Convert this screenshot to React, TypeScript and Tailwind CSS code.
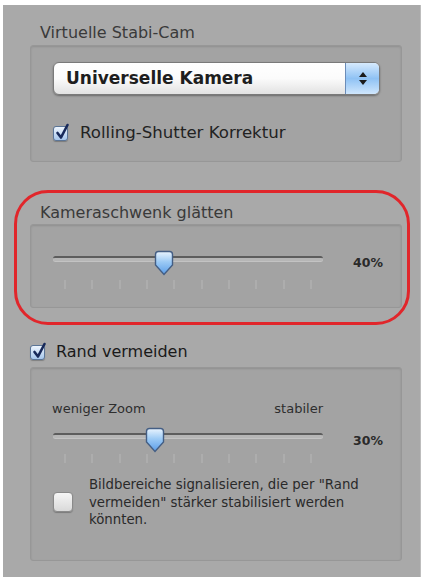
import React from "react";

const FONT = "font-['DejaVu_Sans','Liberation_Sans',sans-serif]";

function Thumb({ id }: { id: string }) {
  return (
    <svg width="20" height="26" viewBox="0 0 20 26">
      <defs>
        <linearGradient id={id} x1="0" y1="0" x2="0" y2="1">
          <stop offset="0" stopColor="#eaf4fe" />
          <stop offset="0.45" stopColor="#9ccaf5" />
          <stop offset="1" stopColor="#5b9de8" />
        </linearGradient>
      </defs>
      <path
        d="M4.5 1.5 H15.5 Q18.5 1.5 18.5 4.5 V15 L10 24.5 L1.5 15 V4.5 Q1.5 1.5 4.5 1.5 Z"
        fill={`url(#${id})`}
        stroke="#445e84"
        strokeWidth="1.4"
      />
    </svg>
  );
}

function Ticks() {
  return (
    <div className="flex justify-between px-[11px]">
      {Array.from({ length: 10 }).map((_, i) => (
        <div key={i} className="w-[2px] h-[9px] bg-[#adadad]" />
      ))}
    </div>
  );
}

function Slider({ thumbClass, id, tickGap }: { thumbClass: string; id: string; tickGap: string }) {
  return (
    <div className="flex flex-col w-[270px]">
      <div className="relative h-[26px]">
        <div className="absolute left-0 right-0 top-[6px] h-[5px] rounded-full border-t-2 border-[#5d5d5d] bg-[#b6b6b6] shadow-[0_1px_0_rgba(255,255,255,0.35)]" />
        <div className={`absolute top-0 ${thumbClass}`}>
          <Thumb id={id} />
        </div>
      </div>
      <div className={tickGap}>
        <Ticks />
      </div>
    </div>
  );
}

function CheckedBox() {
  return (
    <div className="relative w-[15px] h-[15px] rounded-[3px] border border-[#5b7597] bg-gradient-to-b from-[#eef5fd] to-[#a6c6ec] shadow-[0_1px_1px_rgba(0,0,0,0.25)]">
      <svg className="absolute left-[1px] top-[-4px]" width="15" height="18" viewBox="0 0 15 18">
        <path d="M2.5 10 L6 14.5 L12.5 2" fill="none" stroke="#17295a" strokeWidth="2.6" strokeLinecap="round" strokeLinejoin="round" />
      </svg>
    </div>
  );
}

export default function App() {
  return (
    <div className={`w-[429px] h-[584px] bg-white pt-[5px] pl-[3px] ${FONT}`}>
      <div className="relative w-[418px] h-[572px] bg-[#a9a9a9] flex flex-col border-r border-[#bdbdbd]">
        {/* Section 1 */}
        <div className="mt-[18px] ml-[37px] h-[20px] leading-[20px] text-[16px] text-[#3a3a3a]">
          Virtuelle Stabi-Cam
        </div>
        <div className="mt-[2px] ml-[27px] w-[372px] h-[117px] rounded-[3px] border border-[#979797] bg-[#a3a3a3] shadow-[inset_0_1px_2px_rgba(0,0,0,0.12)] flex flex-col pl-[22px] pt-[16px]">
          <div className="w-[327px] h-[33px] rounded-[6px] border border-[#7a7a7a] bg-gradient-to-b from-white via-[#fbfbfb] to-[#e2e2e2] shadow-[0_1px_2px_rgba(0,0,0,0.35)] flex overflow-hidden">
            <div className="flex-1 pl-[12px] flex items-center text-[17px] font-bold text-[#1e1e1e]">
              Universelle Kamera
            </div>
            <div className="w-[34px] border-l border-[#6b8cb8] bg-gradient-to-b from-[#d6eafd] via-[#8fc2f4] to-[#cfe6fc] flex flex-col items-center justify-center gap-[3px]">
              <svg width="8" height="5" viewBox="0 0 8 5">
                <path d="M4 0 L8 5 H0 Z" fill="#1b1b1b" />
              </svg>
              <svg width="8" height="5" viewBox="0 0 8 5">
                <path d="M0 0 H8 L4 5 Z" fill="#1b1b1b" />
              </svg>
            </div>
          </div>
          <div className="mt-[28px] flex items-center gap-[12px]">
            <CheckedBox />
            <span className="text-[16.6px] text-[#222] leading-[20px]">Rolling-Shutter Korrektur</span>
          </div>
        </div>

        {/* Section 2 */}
        <div className="mt-[41px] ml-[37px] h-[20px] leading-[20px] text-[16px] text-[#3a3a3a]">
          Kameraschwenk glätten
        </div>
        <div className="mt-[1px] ml-[27px] w-[372px] h-[84px] rounded-[3px] border border-[#979797] bg-[#a3a3a3] shadow-[inset_0_1px_2px_rgba(0,0,0,0.12)] flex items-start pl-[22px] pt-[25px]">
          <Slider thumbClass="left-[101px]" id="t1" tickGap="mt-[4px]" />
          <span className="ml-[30px] mt-[4px] text-[12.5px] font-bold text-[#2a2a2a]">40%</span>
        </div>

        {/* Section 3 */}
        <div className="mt-[34px] ml-[27px] flex items-center gap-[11px]">
          <CheckedBox />
          <span className="text-[16px] text-[#1a1a1a] leading-[20px]">Rand vermeiden</span>
        </div>
        <div className="mt-[5px] ml-[27px] w-[372px] h-[194px] rounded-[3px] border border-[#979797] bg-[#a3a3a3] shadow-[inset_0_1px_2px_rgba(0,0,0,0.12)] flex flex-col pl-[21px] pt-[32px]">
          <div className="w-[271px] flex justify-between text-[13px] leading-[18px] text-[#2e2e2e]">
            <span>weniger Zoom</span>
            <span>stabiler</span>
          </div>
          <div className="mt-[9px] flex items-start pl-[1px]">
            <Slider thumbClass="left-[92px]" id="t2" tickGap="mt-[1px]" />
            <span className="ml-[30px] mt-[5px] text-[12.5px] font-bold text-[#2a2a2a]">30%</span>
          </div>
          <div className="mt-[13px] flex items-center gap-[16px] pl-[1px]">
            <div className="w-[20px] h-[20px] shrink-0 rounded-[4px] border border-[#8a8a8a] bg-gradient-to-b from-[#f6f6f6] to-[#d9d9d9] shadow-[0_1px_1px_rgba(0,0,0,0.25)]" />
            <p className="text-[13.3px] leading-[17.5px] text-[#2a2a2a] w-[285px]">
              Bildbereiche signalisieren, die per "Rand vermeiden" stärker stabilisiert werden könnten.
            </p>
          </div>
        </div>

        {/* Red annotation */}
        <div className="absolute left-[11px] top-[185px] w-[396px] h-[135px] rounded-[34px] border-[3px] border-[#e1262b]" />
      </div>
    </div>
  );
}
